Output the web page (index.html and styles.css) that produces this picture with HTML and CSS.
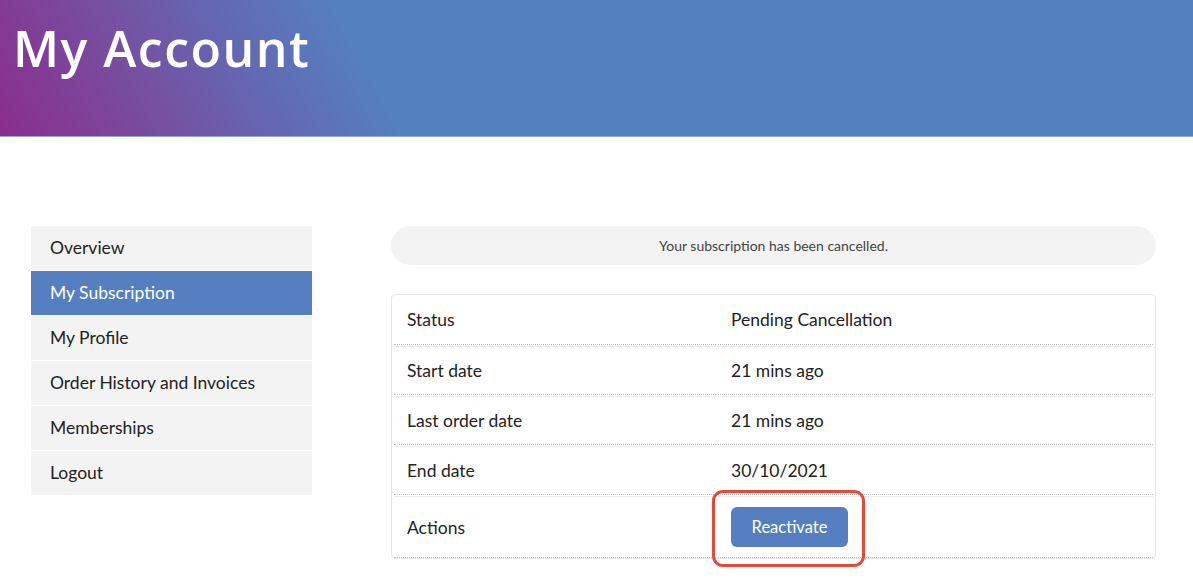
FILE: index.html
```html
<!DOCTYPE html>
<html lang="en">
<head>
    <meta charset="UTF-8">
    <meta name="viewport" content="width=device-width, initial-scale=1.0">
    <title>My Account</title>
    <link rel="stylesheet" href="styles.css">
</head>
<body>
    <header class="page-header">
        <h1>My Account</h1>
    </header>

    <div class="account-layout">
        <nav class="account-nav">
            <a href="#">Overview</a>
            <a href="#" class="active">My Subscription</a>
            <a href="#">My Profile</a>
            <a href="#">Order History and Invoices</a>
            <a href="#">Memberships</a>
            <a href="#">Logout</a>
        </nav>

        <main class="account-content">
            <div class="notice">Your subscription has been cancelled.</div>

            <div class="sub-table-wrap">
                <table class="sub-table">
                    <tr>
                        <td>Status</td>
                        <td>Pending Cancellation</td>
                    </tr>
                    <tr>
                        <td>Start date</td>
                        <td>21 mins ago</td>
                    </tr>
                    <tr>
                        <td>Last order date</td>
                        <td>21 mins ago</td>
                    </tr>
                    <tr>
                        <td>End date</td>
                        <td>30/10/2021</td>
                    </tr>
                    <tr class="actions-row">
                        <td>Actions</td>
                        <td>
                            <span class="highlight">
                                <button class="btn">Reactivate</button>
                            </span>
                        </td>
                    </tr>
                </table>
            </div>
        </main>
    </div>
</body>
</html>
```

FILE: styles.css
```css
* { margin: 0; padding: 0; box-sizing: border-box; }

body {
    font-family: Lato, 'Open Sans', sans-serif;
    color: #222;
    background: #fff;
    min-height: 600px;
}

.page-header {
    height: 137px;
    background: linear-gradient(62deg, #8b2d8d 0%, #7551a2 14%, #6467b2 22%, #5580c0 32%, #5580c0 100%);
    border-bottom: 1px solid #8fa9d6;
    padding: 18px 13px;
}

.page-header h1 {
    font-family: 'Open Sans', sans-serif;
    font-size: 50px;
    font-weight: 600;
    color: #fff;
    letter-spacing: 1.5px;
    line-height: 60px;
}

.account-layout {
    display: flex;
    gap: 79px;
    padding: 89px 37px 0 31px;
}

.account-nav {
    width: 281px;
    flex-shrink: 0;
    display: flex;
    flex-direction: column;
    gap: 1px;
}

.account-nav a {
    display: block;
    height: 44px;
    line-height: 43px;
    padding-left: 19px;
    background: #f3f3f3;
    color: #222;
    text-decoration: none;
    font-size: 17.5px;
}

.account-nav a.active {
    background: #557fc0;
    color: #fff;
}

.account-content {
    flex: 1;
}

.notice {
    height: 39px;
    line-height: 39px;
    background: #f3f3f3;
    border-radius: 20px;
    text-align: center;
    font-size: 14px;
    color: #444;
    margin-bottom: 29px;
}

.sub-table-wrap {
    border: 1px solid #e6e6e6;
    border-radius: 4px;
}

.sub-table {
    width: 100%;
    border-collapse: separate;
    border-spacing: 2px 1px;
    margin: -1px 0;
}

.sub-table td {
    height: 49px;
    padding: 0 13px;
    font-size: 17.5px;
    border-bottom: 1px dotted #bfbfbf;
    vertical-align: middle;
}

.sub-table tr + tr td {
    border-top: 1px solid #ececec;
}

.sub-table td:first-child {
    width: 322px;
}

.sub-table tr:first-child td {
    height: 50px;
}

.actions-row td {
    height: 62px !important;
}

.highlight {
    position: relative;
    display: inline-block;
    vertical-align: middle;
}

.highlight::after {
    content: "";
    position: absolute;
    top: -17px;
    left: -19px;
    right: -17px;
    bottom: -20px;
    border: 3px solid #e04b3b;
    border-radius: 11px;
}

.btn {
    display: block;
    width: 117px;
    height: 40px;
    background: #557fc0;
    color: #fff;
    border: none;
    border-radius: 6px;
    font-family: Lato, 'Open Sans', sans-serif;
    font-size: 16.5px;
    cursor: pointer;
}
```
